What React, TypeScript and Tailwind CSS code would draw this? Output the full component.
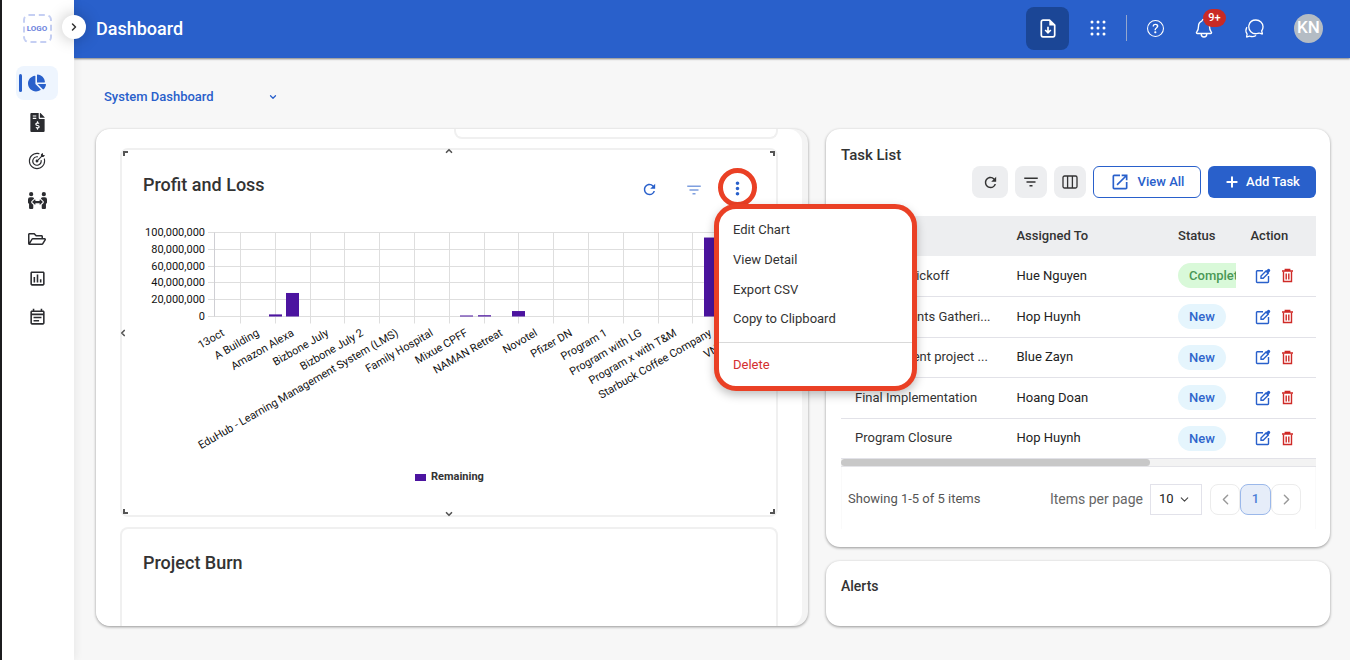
import type { ReactNode } from "react";
import {
  FaChartPie,
  FaFileInvoiceDollar,
  FaPeopleArrows,
  FaRegFolderOpen,
} from "react-icons/fa";
import { GoGoal } from "react-icons/go";
import {
  MdFilterList,
  MdMoreVert,
  MdOpenInNew,
  MdOutlineAssessment,
  MdOutlineEventNote,
  MdRefresh,
} from "react-icons/md";
import { BsQuestionCircle } from "react-icons/bs";
import { IoChatbubblesOutline, IoNotificationsOutline } from "react-icons/io5";
import { ChevronDown, ChevronLeft, ChevronRight, ChevronUp, Plus } from "lucide-react";

const navItems = [
  { label: "Dashboard", icon: <FaChartPie size={18} />, active: true },
  { label: "Invoices", icon: <FaFileInvoiceDollar size={19} /> },
  { label: "Goals", icon: <GoGoal size={18} /> },
  { label: "Resources", icon: <FaPeopleArrows size={19} /> },
  { label: "Projects", icon: <FaRegFolderOpen size={18} /> },
  { label: "Reports", icon: <MdOutlineAssessment size={19} /> },
  { label: "Timesheets", icon: <MdOutlineEventNote size={19} /> },
];

const tasks = [
  { name: "Program Kickoff", assignee: "Hue Nguyen", status: "Completed" },
  { name: "Requirements Gatheri...", assignee: "Hop Huynh", status: "New" },
  { name: "Development project ...", assignee: "Blue Zayn", status: "New" },
  { name: "Final Implementation", assignee: "Hoang Doan", status: "New" },
  { name: "Program Closure", assignee: "Hop Huynh", status: "New" },
];

// one slot per program, every second one gets a label
const chartLabels = [
  "13oct",
  "A Building",
  "Amazon Alexa",
  "Bizbone July",
  "Bizbone July 2",
  "EduHub - Learning Management System (LMS)",
  "Family Hospital",
  "Mixue CPFF",
  "NAMAN Retreat",
  "Novotel",
  "Pfizer DN",
  "Program 1",
  "Program with LG",
  "Program x with T&M",
  "Starbuck Coffee Company",
  "VN Travel",
];

const chartValues: Record<number, number> = {
  3: 2500000,
  4: 28000000,
  14: 1200000,
  15: 1500000,
  17: 6500000,
  28: 94000000,
};

const STEP = 17.4;
const FIRST = 101;
const ZERO = 109.5;
const PLOT = 84;
const slotX = (i: number) => FIRST + i * STEP;

function ProfitChart() {
  const ticks = [0, 20000000, 40000000, 60000000, 80000000, 100000000];
  return (
    <svg viewBox="0 0 654 308" className="block w-full" role="img" aria-label="Profit and Loss chart">
      {ticks.map((t) => {
        const y = Math.floor(ZERO - (t / 100000000) * PLOT) + 0.5;
        return (
          <g key={t}>
            <line x1="86" x2="634" y1={y} y2={y} stroke="#dedede" />
            <text x="83" y={y + 3} textAnchor="end" fontSize="11" fill="#111">
              {t.toLocaleString("en-US")}
            </text>
          </g>
        );
      })}
      <line x1="92.5" x2="92.5" y1={ZERO - PLOT} y2={ZERO} stroke="#cfcfd4" />
      {chartLabels.map((label, i) => {
        const grid = Math.floor(slotX(i * 2 + 1)) + 0.5;
        const x = slotX(i * 2) + 2;
        return (
          <g key={label}>
            <line x1={grid} x2={grid} y1={ZERO - PLOT} y2={ZERO + 7} stroke="#dedede" />
            <text
              x={x}
              y="128"
              textAnchor="end"
              fontSize="11"
              fill="#111"
              transform={`rotate(-30 ${x} 128)`}
            >
              {label}
            </text>
          </g>
        );
      })}
      {Object.entries(chartValues).map(([slot, value]) => {
        const h = (value / 100000000) * PLOT;
        return (
          <rect
            key={slot}
            x={Math.round(slotX(Number(slot)) - 6.5)}
            y={ZERO - h}
            width="13"
            height={h}
            fill="#4c14a0"
          />
        );
      })}
      <rect x="293" y="267" width="11" height="7" fill="#4c14a0" />
      <text x="309" y="273" fontSize="11" fontWeight="700" fill="#333">
        Remaining
      </text>
    </svg>
  );
}

function FileDownIcon() {
  return (
    <svg width="16" height="19" viewBox="0 0 16 19" fill="none" stroke="currentColor" strokeWidth="1.7">
      <path d="M9.500 1.200H3A1.700 1.700 0 0 0 1.300 2.900V16.100A1.700 1.700 0 0 0 3 17.800H13A1.700 1.700 0 0 0 14.700 16.100V6.200z" strokeLinejoin="round" />
      <path d="M9.300 1V6.500H14.800z" fill="currentColor" stroke="none" />
      <path d="M8 7.800V13.600M5.200 11L8 13.800L10.800 11" />
    </svg>
  );
}

function DotsIcon() {
  const at = [2, 8, 14];
  return (
    <svg width="16" height="16" viewBox="0 0 16 16" fill="currentColor">
      {at.map((y) => at.map((x) => <circle key={`${x}-${y}`} cx={x} cy={y} r="1.5" />))}
    </svg>
  );
}

function ColumnsIcon() {
  return (
    <svg width="16" height="14" viewBox="0 0 16 14" fill="none" stroke="currentColor" strokeWidth="1.3">
      <rect x="1" y="1" width="14" height="12" rx="1.500" />
      <path d="M5.600 1V13M10.400 1V13" />
    </svg>
  );
}

function EditIcon() {
  return (
    <svg width="16" height="16" viewBox="0 0 16 16" fill="none" stroke="currentColor" strokeWidth="1.4">
      <path d="M8 2.700H2.200A.7.7 0 0 0 1.500 3.400V13.800A.7.7 0 0 0 2.200 14.500H12.800A.7.7 0 0 0 13.500 13.800V8" />
      <path d="M6 10.200V8L11 3L13.200 5.200L8.200 10.200z" />
      <path d="M11 2.800L12.400 1.400A1.500 1.500 0 0 1 14.800 3.600L13.400 5.200z" fill="currentColor" stroke="none" />
    </svg>
  );
}

function TrashIcon() {
  return (
    <svg width="13" height="15" viewBox="0 0 13 15" fill="none" stroke="currentColor" strokeWidth="1.400">
      <path d="M1 3H12M4.300 2.600V1.500H8.700V2.600" />
      <path d="M2.500 3.500V13.500H10.500V3.500" />
      <path d="M5.200 5.500V11.500M7.800 5.500V11.500" />
    </svg>
  );
}

function ToolButton({ label, className, children }: { label: string; className: string; children: ReactNode }) {
  return (
    <button
      aria-label={label}
      className={`flex h-8 items-center justify-center rounded-lg bg-[#edeef0] text-[#333] ${className}`}
    >
      {children}
    </button>
  );
}

function Sidebar() {
  return (
    <aside className="relative z-10 flex w-[74px] shrink-0 flex-col items-center border-l-2 border-[#1c1c1e] bg-white pt-3.5 pr-0.5 shadow-[2px_0_8px_rgba(0,0,0,0.06)]">
      <div className="flex size-[29px] items-center justify-center rounded-md border-2 border-dashed border-[#c5cff3] text-[8px] font-bold text-[#6c83dd]">
        LOGO
      </div>
      <button
        aria-label="Expand menu"
        className="absolute top-[15px] -right-3 flex size-6 items-center justify-center rounded-full bg-white text-[#333] shadow-[0_0_16px_rgba(0,0,0,0.25)]"
      >
        <ChevronRight size={12} strokeWidth={3} />
      </button>
      <nav className="mt-[23px] flex flex-col gap-[5px]">
        {navItems.map((item) => (
          <a
            key={item.label}
            href="#"
            aria-label={item.label}
            className={
              item.active
                ? "flex h-[34px] w-[42px] items-center rounded-lg bg-[#eef5fe] pl-[3px] text-[#2960cb]"
                : "flex h-[34px] w-[42px] items-center justify-center text-[#2b2c30]"
            }
          >
            {item.active && <span className="mr-1.5 h-[18px] w-[3px] rounded-full bg-[#2960cb]" />}
            {item.icon}
          </a>
        ))}
      </nav>
    </aside>
  );
}

function Header() {
  return (
    <header className="flex h-[58px] items-center bg-[#2960cb] pr-[27px] pb-0.5 pl-[22px] text-white shadow-[0_1px_2px_rgba(0,0,0,0.5)]">
      <h1 className="flex-1 text-[18px] font-medium">Dashboard</h1>
      <button aria-label="Export" className="flex size-[43px] items-center justify-center rounded-lg bg-[#1b4696]">
        <FileDownIcon />
      </button>
      <button aria-label="Apps" className="ml-[21px]">
        <DotsIcon />
      </button>
      <span className="mr-5 ml-5 h-[26px] w-px bg-[#93a7cf]" />
      <div className="flex items-center gap-[29px]">
        <button aria-label="Help">
          <BsQuestionCircle size={17} />
        </button>
        <button aria-label="Notifications" className="relative">
          <IoNotificationsOutline size={22} />
          <span className="absolute -top-2 left-[10px] flex h-[18px] w-[23px] items-center justify-center rounded-full bg-[#c92a25] text-[11px] font-medium">
            9+
          </span>
        </button>
        <button aria-label="Messages">
          <IoChatbubblesOutline size={21} />
        </button>
        <button className="flex size-[29px] items-center justify-center rounded-full bg-[#b4bcc4] text-[17px] font-medium">
          KN
        </button>
      </div>
    </header>
  );
}

function ResizeHandles() {
  return (
    <div className="pointer-events-none text-[#555]">
      <span className="absolute top-px left-px size-[5px] border-t-2 border-l-2" />
      <span className="absolute top-px right-px size-[5px] border-t-2 border-r-2" />
      <span className="absolute bottom-px left-px size-[5px] border-b-2 border-l-2" />
      <span className="absolute right-px bottom-px size-[5px] border-r-2 border-b-2" />
      <ChevronUp size={10} strokeWidth={4} className="absolute -top-1 left-1/2 -translate-x-1/2" />
      <ChevronDown size={10} strokeWidth={4} className="absolute -bottom-1 left-1/2 -translate-x-1/2" />
      <ChevronLeft size={10} strokeWidth={4} className="absolute top-1/2 -left-1 -translate-y-1/2" />
    </div>
  );
}

function ChartMenu() {
  return (
    <div className="absolute top-[75px] -right-[109px] z-20 flex w-[203px] flex-col rounded-[22px] border-[5px] border-[#ea4025] bg-white pt-1.5 pb-1.5 text-[13px] text-[#333] shadow-[0_4px_10px_rgba(0,0,0,0.25)]">
      <button className="h-[30px] px-3.5 text-left">Edit Chart</button>
      <button className="h-[30px] px-3.5 text-left">View Detail</button>
      <button className="h-[29px] px-3.5 text-left">Export CSV</button>
      <button className="h-[30px] px-3.5 text-left">Copy to Clipboard</button>
      <hr className="mt-2 mb-[7px] border-[#d9d9d9]" />
      <button className="h-[30px] px-3.5 text-left text-[#d32f2f]">Delete</button>
    </div>
  );
}

function ChartsPanel() {
  return (
    <section className="relative w-0 grow-[712]">
      <div className="flex h-full overflow-hidden rounded-[14px] bg-[#f4f4f4] shadow-[0_1px_3px_rgba(0,0,0,0.4)]">
        <div className="flex flex-1 flex-col rounded-[14px] bg-white px-6">
          <div className="ml-auto h-[10px] w-[324px] rounded-b-lg border-2 border-t-0 border-[#f0f0f0]" />
          <article className="relative mt-[9px] rounded-lg border-2 border-[#f0f0f0]">
            <ResizeHandles />
            <div className="flex items-center gap-[3px] pt-[18px] pr-[19px] pl-[21px] text-[#2960cb]">
              <h2 className="flex-1 pb-1.5 text-[18px] font-medium text-[#333]">Profit and Loss</h2>
              <button aria-label="Refresh chart" className="flex w-10 justify-center pt-1">
                <MdRefresh size={17} />
              </button>
              <button aria-label="Filter chart" className="flex w-[43px] justify-center pt-1 opacity-60">
                <MdFilterList size={18} />
              </button>
              <button
                aria-label="Chart options"
                className="flex size-[39px] items-center justify-center rounded-full border-[5px] border-[#ea4025] pt-0.5"
              >
                <MdMoreVert size={21} className="shrink-0" />
              </button>
            </div>
            <ProfitChart />
          </article>
          <article className="mt-2.5 flex-1 rounded-t-lg border-2 border-b-0 border-[#f0f0f0] px-[21px] pt-5 pb-12">
            <h2 className="text-[18px] leading-[27px] font-medium text-[#333]">Project Burn</h2>
          </article>
        </div>
        <div className="w-1.5" />
      </div>
      <ChartMenu />
    </section>
  );
}

function TaskTable() {
  return (
    <table className="w-full table-fixed border-collapse text-left text-[13px] text-[#333]">
      <colgroup>
        <col className="w-[34%]" />
        <col className="w-[34%]" />
        <col className="w-[72px]" />
        <col className="w-[79px]" />
      </colgroup>
      <thead>
        <tr className="h-10 bg-[#edeef0]">
          <th className="pl-3.5 font-medium">Name</th>
          <th className="pl-3.5 font-medium">Assigned To</th>
          <th className="pl-3.5 font-medium">Status</th>
          <th className="pl-3.5 font-medium">Action</th>
        </tr>
      </thead>
      <tbody>
        {tasks.map((task) => (
          <tr key={task.name} className="border-b border-[#e2e2e8] odd:h-10 even:h-[41px]">
            <td className="pl-3.5 whitespace-nowrap">{task.name}</td>
            <td className="pl-3.5 whitespace-nowrap text-[#222]">{task.assignee}</td>
            <td className="overflow-hidden pl-3.5">
              <span
                className={
                  task.status === "New"
                    ? "inline-block rounded-full bg-[#e5f5fd] px-[11px] leading-[25px] font-medium text-[#2f66cc]"
                    : "inline-block rounded-full bg-[#d9f9d9] px-[11px] leading-[25px] font-medium text-[#4a9856]"
                }
              >
                {task.status}
              </span>
            </td>
            <td className="pl-[19px]">
              <div className="flex items-center gap-2.5">
                <button aria-label={`Edit ${task.name}`} className="text-[#2960cb]">
                  <EditIcon />
                </button>
                <button aria-label={`Delete ${task.name}`} className="text-[#cf2a27]">
                  <TrashIcon />
                </button>
              </div>
            </td>
          </tr>
        ))}
      </tbody>
    </table>
  );
}

function TaskList() {
  return (
    <section className="flex-1 rounded-[14px] bg-white pt-[15px] pr-3.5 pb-[18px] pl-[15px] shadow-[0_1px_3px_rgba(0,0,0,0.4)]">
      <h2 className="text-[15px] leading-[22px] font-medium text-[#333]">Task List</h2>
      <div className="mb-[18px] flex justify-end gap-[7px] text-[13px] font-medium">
        <ToolButton label="Refresh tasks" className="w-9">
          <MdRefresh size={17} />
        </ToolButton>
        <ToolButton label="Filter tasks" className="w-8">
          <MdFilterList size={18} />
        </ToolButton>
        <ToolButton label="Columns" className="w-8">
          <ColumnsIcon />
        </ToolButton>
        <button className="flex h-8 w-[108px] items-center justify-center gap-2 rounded-md border border-[#2960cb] text-[#2960cb]">
          <MdOpenInNew size={20} />
          View All
        </button>
        <button className="flex h-8 w-[108px] items-center justify-center gap-1.5 rounded-md bg-[#2960cb] text-white">
          <Plus size={16} strokeWidth={3} />
          Add Task
        </button>
      </div>
      <TaskTable />
      <div className="h-2 border-b border-[#e4e4e8] bg-[#f3f3f3]">
        <div className="h-[7px] w-[65%] rounded-full bg-[#c8c8c8]" />
      </div>
      <div className="flex items-center border-x border-[#fafafa] pt-[17px] pr-3.5 pb-3.5 pl-1.5 text-[13px] text-[#555]">
        <span className="flex-1">Showing 1-5 of 5 items</span>
        <label htmlFor="page-size" className="mr-[7px] text-[14px] text-[#666]">
          Items per page
        </label>
        <div className="relative mr-2">
          <select
            id="page-size"
            className="h-[31px] w-[52px] appearance-none border border-[#e2e2ea] bg-white pl-2 text-[#222]"
          >
            <option>10</option>
          </select>
          <ChevronDown size={13} className="pointer-events-none absolute top-[9px] right-[11px] text-[#444]" />
        </div>
        <button aria-label="Previous page" className="flex h-[31px] w-[30px] items-center justify-center rounded-lg border border-[#ececec] text-[#999]">
          <ChevronLeft size={17} />
        </button>
        <button className="h-[31px] w-[31px] rounded-lg border border-[#9bb8ea] bg-[#e6edf9] font-medium text-[#4c80d8]">
          1
        </button>
        <button aria-label="Next page" className="flex h-[31px] w-[30px] items-center justify-center rounded-lg border border-[#ececec] text-[#999]">
          <ChevronRight size={17} />
        </button>
      </div>
    </section>
  );
}

export default function App() {
  return (
    <div className="flex min-h-screen bg-[#f7f7f7] font-['Roboto','Liberation_Sans',sans-serif]">
      <Sidebar />
      <div className="flex min-w-0 flex-1 flex-col">
        <Header />
        <main className="pt-[26px] pr-5 pb-8 pl-[22px]">
          <div className="relative mb-[19px] ml-2 w-[178px] text-[#2960cb]">
            <select
              aria-label="Dashboard"
              className="block h-[26px] w-full appearance-none bg-transparent text-[13px] font-medium"
            >
              <option>System Dashboard</option>
            </select>
            <ChevronDown size={10} strokeWidth={3} className="pointer-events-none absolute top-2 right-1" />
          </div>
          <div className="flex gap-[18px]">
            <ChartsPanel />
            <div className="flex w-0 grow-[504] flex-col gap-3.5">
              <TaskList />
              <section className="rounded-[14px] bg-white pt-3.5 pr-3.5 pb-[29px] pl-[15px] shadow-[0_1px_3px_rgba(0,0,0,0.4)]">
                <h2 className="text-[14px] leading-[22px] font-medium text-[#333]">Alerts</h2>
              </section>
            </div>
          </div>
        </main>
      </div>
    </div>
  );
}
